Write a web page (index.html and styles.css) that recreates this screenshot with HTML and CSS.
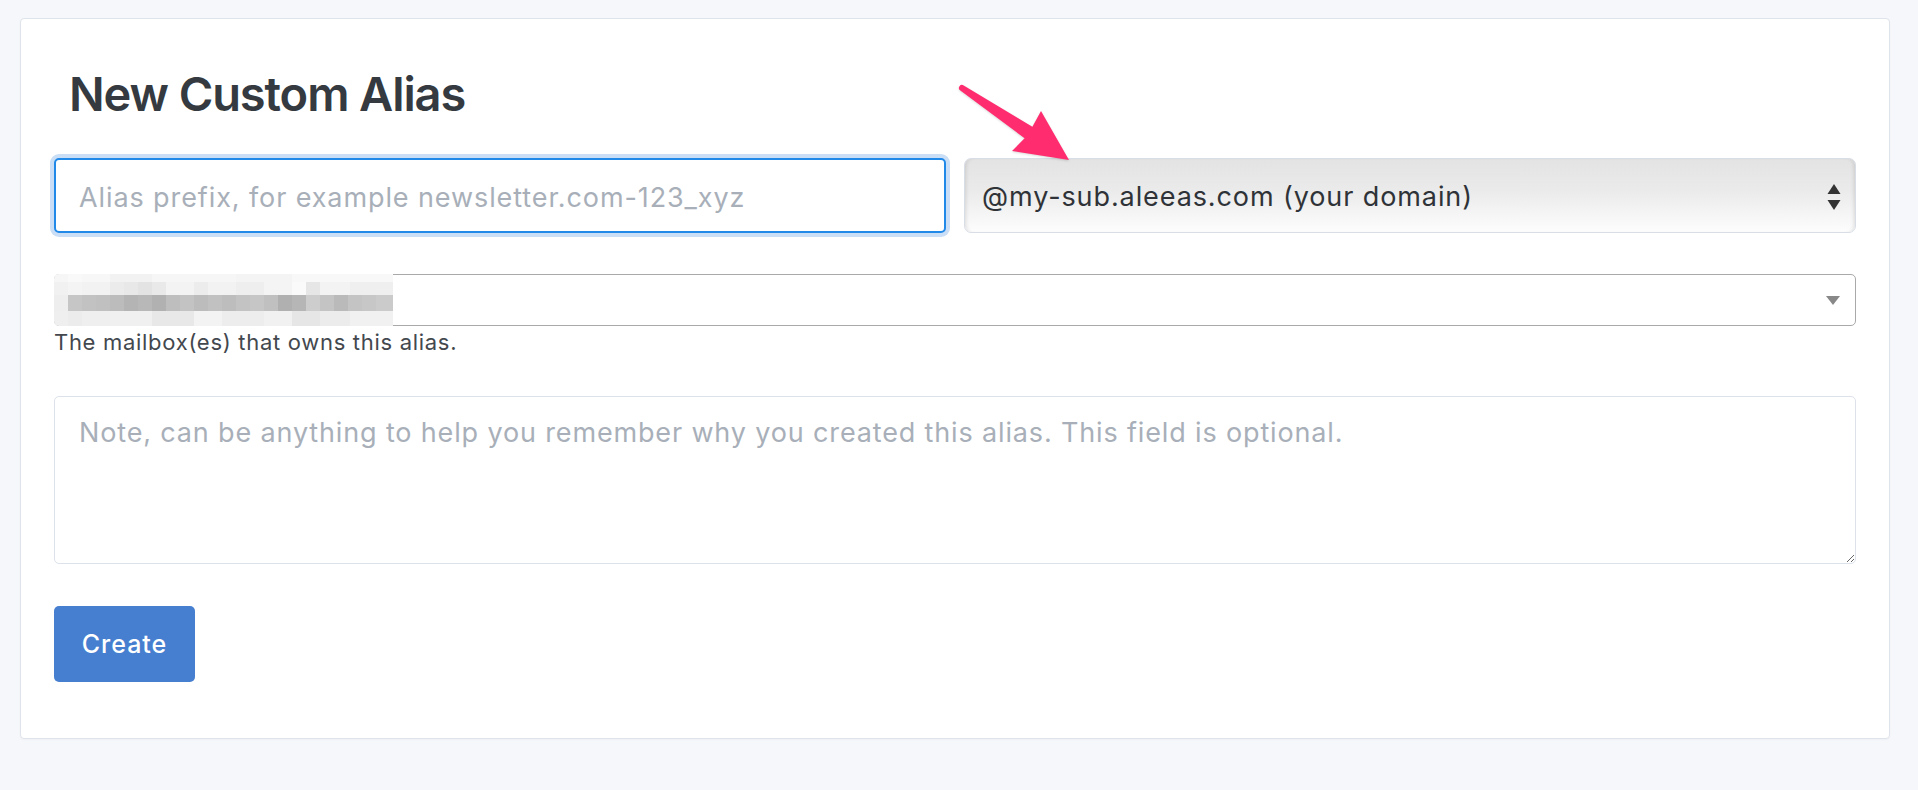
FILE: index.html
```html
<!DOCTYPE html>
<html lang="en">
<head>
<meta charset="utf-8">
<title>New Custom Alias</title>
<link rel="stylesheet" href="styles.css">
</head>
<body>
<div class="card">
  <h1 class="title">New Custom Alias</h1>
  <form class="form">
    <div class="row">
      <input class="prefix" type="text" placeholder="Alias prefix, for example newsletter.com-123_xyz">
      <div class="suffix">
        <span class="suffix-text">@my-sub.aleeas.com (your domain)</span>
        <svg class="updown" width="14" height="26" viewBox="0 0 14 26"><path d="M7 0 L13.5 10 L0.5 10 Z" fill="#333"/><path d="M0.5 16 L13.5 16 L7 26 Z" fill="#333"/></svg>
      </div>
    </div>
    <div class="mailbox">
      <div class="mosaic">
        <div class="m-row m-top"></div>
        <div class="m-row m-light1"></div>
        <div class="m-row m-dark"></div>
        <div class="m-row m-light2"></div>
      </div>
      <svg class="caret" width="14" height="9" viewBox="0 0 14 9"><path d="M0 0 L14 0 L7 9 Z" fill="#888"/></svg>
    </div>
    <div class="help">The mailbox(es) that owns this alias.</div>
    <textarea class="note" placeholder="Note, can be anything to help you remember why you created this alias. This field is optional."></textarea>
    <button class="btn" type="button">Create</button>
  </form>
</div>
<svg class="pointer" width="140" height="100" viewBox="940 70 140 100">
  <path d="M963.7 85.5 L1032.4 126.7 L1041 111 L1069 160 L1012 151 L1024.6 138.3 L960.3 90.5 A3 3 0 0 1 963.7 85.5 Z" fill="#ff2d6f"/>
</svg>
</body>
</html>
```
FILE: styles.css
```css
* { box-sizing: border-box; }
html, body { margin: 0; padding: 0; }
body {
  position: relative;
  background: #f5f7fb;
  font-family: Inter, "Noto Sans", "Liberation Sans", sans-serif;
  color: #343a40;
  width: 1918px;
  height: 790px;
  overflow: hidden;
}
.card {
  margin: 18px 28px 0 20px;
  background: #fff;
  border: 1px solid #dfe4eb;
  border-radius: 4px;
  padding: 46px 33px 56px;
  box-shadow: 0 1px 2px rgba(0,0,0,0.03);
}
.title {
  margin: 0 0 35px 15px;
  font-size: 47px;
  line-height: 58px;
  font-weight: 600;
  color: #343a40;
  letter-spacing: -1.1px;
}
.form { display: flex; flex-direction: column; align-items: flex-start; }
.row {
  width: 100%;
  display: grid;
  grid-template-columns: 1fr 1fr;
  gap: 18px;
  height: 75px;
}
.prefix {
  height: 75px;
  border: 2px solid #2189e8;
  border-radius: 5px;
  box-shadow: 0 0 0 4px #cadef5;
  padding: 3px 23px 0;
  font-family: inherit;
  font-size: 27px;
  letter-spacing: 0.9px;
  color: #343a40;
  outline: none;
  background: #fff;
}
.prefix::placeholder { color: #a8afb9; }
.suffix {
  height: 75px;
  border: 1px solid #d9dee6;
  border-radius: 7px;
  background: linear-gradient(to bottom, #e3e3e3 0%, #ebebeb 45%, #fdfdfd 100%);
  box-shadow: inset 4px 0 4px -3px rgba(0,0,0,0.12), inset -4px 0 4px -3px rgba(0,0,0,0.12);
  display: flex;
  align-items: center;
  justify-content: space-between;
  padding: 2px 14px 0 17px;
}
.suffix-text { font-size: 27px; letter-spacing: 0.9px; color: #2f3338; }
.mailbox {
  position: relative;
  margin-top: 41px;
  width: 100%;
  height: 52px;
  border: 1px solid #a9a9a9;
  border-radius: 5px;
  display: flex;
  align-items: center;
  justify-content: flex-end;
  padding-right: 15px;
}
.caret { display: block; }
.mosaic {
  position: absolute;
  left: -1px;
  top: -1px;
  width: 339px;
  height: 52px;
  display: flex;
  flex-direction: column;
  border-radius: 5px 0 0 5px;
  overflow: hidden;
}
.m-row { width: 100%; }
.m-top {
  height: 8px;
  background: linear-gradient(to right, #f6f6f6 0 14px, #f9f9f9 14px 28px, #f7f7f7 28px 56px, #f2f2f2 56px 98px, #f6f6f6 98px 182px, #f4f4f4 182px 238px, #f8f8f8 238px 339px);
}
.m-light1 {
  height: 13px;
  background: linear-gradient(to right, #f1f1f1 0 14px, #f4f4f4 14px 28px, #f2f2f2 28px 56px, #ebebeb 56px 70px, #e8e8e8 70px 84px, #e3e3e3 84px 98px, #e9e9e9 98px 112px, #f3f3f3 112px 140px, #ececec 140px 154px, #f2f2f2 154px 182px, #eeeeee 182px 210px, #f4f4f4 210px 238px, #fafafa 238px 252px, #e6e6e6 252px 266px, #f3f3f3 266px 296px, #efefef 296px 339px);
}
.m-dark {
  height: 16px;
  background: linear-gradient(to right, #eeeeee 0 14px, #c6c6c6 14px 28px, #c2c2c2 28px 42px, #c0c0c0 42px 56px, #bcbcbc 56px 70px, #b4b4b4 70px 84px, #b8b8b8 84px 98px, #b1b1b1 98px 112px, #bebebe 112px 126px, #c3c3c3 126px 140px, #bcbcbc 140px 154px, #c1c1c1 154px 168px, #bdbdbd 168px 182px, #c3c3c3 182px 196px, #c6c6c6 196px 210px, #c0c0c0 210px 224px, #b0b0b0 224px 238px, #b6b6b6 238px 252px, #cdcdcd 252px 266px, #c4c4c4 266px 280px, #bababa 280px 294px, #c4c4c4 294px 308px, #c7c7c7 308px 322px, #cbcbcb 322px 339px);
}
.m-light2 {
  height: 15px;
  background: linear-gradient(to right, #efefef 0 14px, #ececec 14px 28px, #efefef 28px 56px, #f0f0f0 56px 98px, #e8e8e8 98px 140px, #f3f3f3 140px 168px, #ededed 168px 210px, #f1f1f1 210px 238px, #e6e6e6 238px 266px, #ececec 266px 296px, #f1f1f1 296px 339px);
}
.help {
  font-size: 22px;
  line-height: 33px;
  letter-spacing: 0.7px;
  color: #43484e;
}
.note {
  margin-top: 37px;
  width: 100%;
  height: 168px;
  border: 1px solid #dde2ea;
  border-radius: 5px;
  padding: 17px 24px;
  font-family: inherit;
  font-size: 27px;
  letter-spacing: 0.85px;
  line-height: 38px;
  color: #343a40;
  resize: vertical;
  outline: none;
}
.note::placeholder { color: #a8afb9; }
.btn {
  margin-top: 42px;
  width: 141px;
  height: 76px;
  border: none;
  border-radius: 5px;
  background: #467fcf;
  color: #fff;
  font-family: inherit;
  font-size: 25px;
  font-weight: 500;
  letter-spacing: 1px;
  padding: 0;
  cursor: pointer;
}
.pointer {
  position: absolute;
  left: 940px;
  top: 70px;
  filter: drop-shadow(0 1px 1px rgba(0,0,0,0.15));
}
```
